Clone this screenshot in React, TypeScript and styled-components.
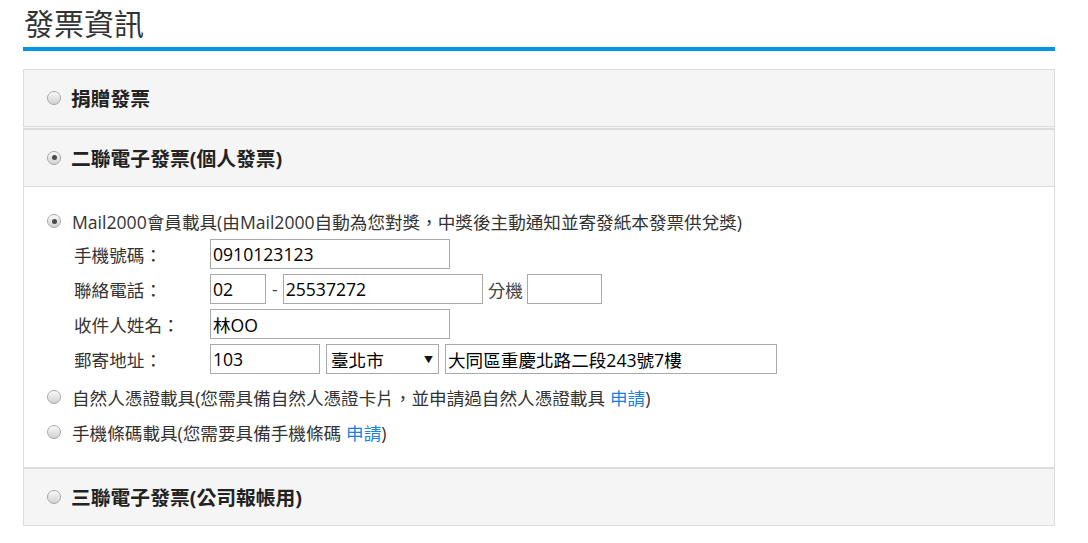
import React from 'react'
import styled, { createGlobalStyle } from 'styled-components'

const GlobalStyle = createGlobalStyle`
    body {
        margin: 0;
        background: #fff;
        font-family: "Open Sans", "Noto Sans CJK TC", sans-serif;
        color: #333;
    }
`

const Page = styled.div`
    width: 1032px;
    padding-left: 23px;
`

const Title = styled.h2`
    margin: 0;
    padding: 4px 0 4px 1px;
    font-size: 30px;
    line-height: 39px;
    font-weight: normal;
    color: #333;
    border-bottom: 4px solid #0096e1;
`

const PanelGroup = styled.div`
    margin-top: 18px;
`

const Panel = styled.div<{ $gap?: number; $top?: number }>`
    border: 1px solid #dcdcdc;
    border-top-width: ${({ $top }) => $top ?? 1}px;
    margin-top: ${({ $gap }) => $gap ?? 0}px;
    background: #fff;
    box-shadow: 0 1px 1px rgba(0, 0, 0, 0.04);
`

const PanelHeading = styled.div<{ $open?: boolean }>`
    height: 56px;
    display: flex;
    align-items: center;
    padding: 0 0 1px 23px;
    box-sizing: border-box;
    background: #f5f5f5;
    font-size: 19.8px;
    font-weight: bold;
    color: #222;
    ${({ $open }) => ($open ? 'height: 57px; border-bottom: 1px solid #dcdcdc;' : '')}

    & > span:first-child {
        margin-right: 10px;
    }
`

const PanelBody = styled.div`
    padding: 21px 0 22px 23px;
`

const Radio = styled.span<{ $checked?: boolean }>`
    position: relative;
    display: inline-block;
    width: 14px;
    height: 14px;
    box-sizing: border-box;
    border-radius: 50%;
    border: 1px solid #a6a6a6;
    background: linear-gradient(#f7f7f7, #d2d2d2);
    box-shadow: inset 0 1px 1px rgba(255, 255, 255, 0.8);
    margin-right: 11px;
    flex-shrink: 0;

    &::after {
        content: '';
        display: ${({ $checked }) => ($checked ? 'block' : 'none')};
        position: absolute;
        left: 3.5px;
        top: 3.5px;
        width: 5px;
        height: 5px;
        border-radius: 50%;
        background: #4a4a4a;
    }
`

const OptionLine = styled.div<{ $gap?: number }>`
    display: flex;
    align-items: center;
    height: 26px;
    margin-top: ${({ $gap }) => $gap ?? 0}px;
    font-size: 17.6px;
    color: #333;
    white-space: nowrap;
`

const Link = styled.a`
    color: #1a80e0;
    text-decoration: none;
    margin-left: 5px;
`

const Form = styled.div`
    display: flex;
    flex-direction: column;
    gap: 5px;
    margin: 5px 0 0 27px;
`

const Row = styled.div`
    display: flex;
    align-items: center;
    height: 30px;
    font-size: 17.6px;
`

const Label = styled.span`
    width: 136px;
    color: #333;
    white-space: nowrap;
`

const Input = styled.input<{ $w: number; $ml?: number }>`
    box-sizing: border-box;
    width: ${({ $w }) => $w}px;
    height: 30px;
    margin: 0 0 0 ${({ $ml }) => $ml ?? 0}px;
    padding: 0 2px;
    border: 1px solid #a9a9a9;
    border-radius: 0;
    font-family: "Open Sans", "Noto Sans CJK TC", sans-serif;
    font-size: 17.6px;
    color: #000;
    outline: none;
`

const Sep = styled.span<{ $ml: number; $mr: number }>`
    margin: 0 ${({ $mr }) => $mr}px 0 ${({ $ml }) => $ml}px;
    color: #444;
`

const SelectBox = styled.div`
    position: relative;
    box-sizing: border-box;
    width: 113px;
    height: 30px;
    margin-left: 6px;
    border: 1px solid #a9a9a9;
    display: flex;
    align-items: center;
    padding-left: 4px;
    color: #000;
`

const Arrow = styled.span`
    position: absolute;
    right: 5px;
    top: 8px;
    font-size: 9px;
    color: #111;
`

function Option({ checked, gap, children }: { checked?: boolean; gap?: number; children: React.ReactNode }) {
    return (
        <OptionLine $gap={gap}>
            <Radio $checked={checked} />
            <span>{children}</span>
        </OptionLine>
    )
}

export default function App() {
    return (
        <>
            <GlobalStyle />
            <Page>
                <Title>發票資訊</Title>
                <PanelGroup>
                    <Panel>
                        <PanelHeading>
                            <Radio />
                            捐贈發票
                        </PanelHeading>
                    </Panel>

                    <Panel $gap={1} $top={2}>
                        <PanelHeading $open>
                            <Radio $checked />
                            二聯電子發票(個人發票)
                        </PanelHeading>
                        <PanelBody>
                            <Option checked>
                                Mail2000會員載具(由Mail2000自動為您對獎，中獎後主動通知並寄發紙本發票供兌獎)
                            </Option>
                            <Form>
                                <Row>
                                    <Label>手機號碼：</Label>
                                    <Input $w={240} defaultValue="0910123123" />
                                </Row>
                                <Row>
                                    <Label>聯絡電話：</Label>
                                    <Input $w={56} defaultValue="02" />
                                    <Sep $ml={6} $mr={5}>-</Sep>
                                    <Input $w={200} defaultValue="25537272" />
                                    <Sep $ml={5} $mr={4}>分機</Sep>
                                    <Input $w={75} defaultValue="" />
                                </Row>
                                <Row>
                                    <Label>收件人姓名：</Label>
                                    <Input $w={240} defaultValue="林OO" />
                                </Row>
                                <Row>
                                    <Label>郵寄地址：</Label>
                                    <Input $w={110} defaultValue="103" />
                                    <SelectBox>
                                        臺北市
                                        <Arrow>▼</Arrow>
                                    </SelectBox>
                                    <Input $w={332} $ml={6} defaultValue="大同區重慶北路二段243號7樓" />
                                </Row>
                            </Form>
                            <Option gap={10}>
                                自然人憑證載具(您需具備自然人憑證卡片，並申請過自然人憑證載具
                                <Link href="#">申請</Link>)
                            </Option>
                            <Option gap={9}>
                                手機條碼載具(您需要具備手機條碼
                                <Link href="#">申請</Link>)
                            </Option>
                        </PanelBody>
                    </Panel>

                    <Panel>
                        <PanelHeading>
                            <Radio />
                            三聯電子發票(公司報帳用)
                        </PanelHeading>
                    </Panel>
                </PanelGroup>
            </Page>
        </>
    )
}
